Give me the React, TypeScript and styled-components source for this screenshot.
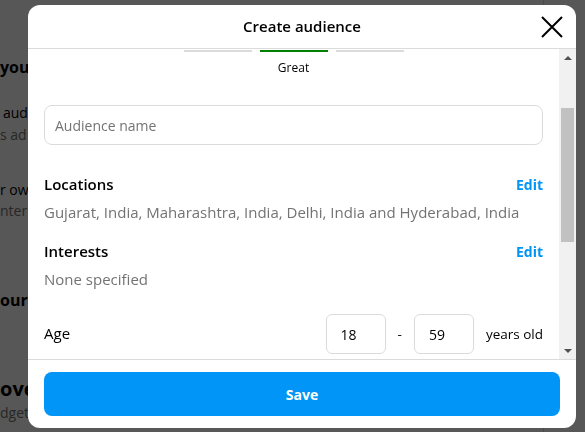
import React, { useLayoutEffect, useRef, useState } from "react";
import styled, { createGlobalStyle } from "styled-components";

const font = `"Open Sans", "Noto Sans", sans-serif`;

const GlobalStyle = createGlobalStyle`
  html, body { margin: 0; padding: 0; }
  body { font-family: ${font}; background: #fff; overflow: hidden; color: #000; }
  * { box-sizing: border-box; }
`;

/* page behind the dialog */
const Page = styled.div`
  display: flex;
  width: 585px;
  height: 432px;
`;
const PageMain = styled.div`
  width: 544px;
  border-right: 1px solid #dbdbdb;
  display: flex;
  flex-direction: column;
  overflow: hidden;
`;
const BgLine = styled.div<{ $top: number; $size?: number; $bold?: boolean; $muted?: boolean; $indent?: number }>`
  margin-top: ${(p) => p.$top}px;
  margin-left: ${(p) => p.$indent || 0}px;
  font-size: ${(p) => p.$size || 14}px;
  line-height: ${(p) => (p.$size && p.$size > 16 ? 24 : 20)}px;
  font-weight: ${(p) => (p.$bold ? 700 : 400)};
  color: ${(p) => (p.$muted ? "#737373" : "#000")};
  white-space: nowrap;
`;

/* dialog */
const Overlay = styled.div`
  position: fixed;
  inset: 0;
  background: rgba(0, 0, 0, 0.66);
  padding: 5px 0 0 28px;
`;
const Modal = styled.div`
  width: 548px;
  height: 423px;
  background: #fff;
  border-radius: 12px;
  display: flex;
  flex-direction: column;
  overflow: hidden;
`;
const Header = styled.div`
  height: 44px;
  flex: none;
  border-bottom: 1px solid #dbdbdb;
  display: grid;
  grid-template-columns: 48px 1fr 48px;
  align-items: center;
`;
const Title = styled.h1`
  grid-column: 2;
  margin: 0;
  text-align: center;
  font-size: 15px;
  font-weight: 600;
  color: #000;
  line-height: 20px;
  padding-bottom: 2px;
`;
const CloseButton = styled.button`
  grid-column: 3;
  justify-self: end;
  margin-right: 12px;
  width: 24px;
  height: 24px;
  padding: 0;
  border: 0;
  background: none;
  display: flex;
  align-items: center;
  justify-content: center;
  cursor: pointer;
`;
const BodyWrap = styled.div`
  flex: 1;
  min-height: 0;
  display: flex;
`;
const Body = styled.div`
  flex: 1;
  position: relative;
  overflow: hidden;
  padding: 0 16px;
`;

/* drawn scrollbar (the browser hides native ones) */
const ScrollBar = styled.div`
  width: 17px;
  flex: none;
  background: #f1f1f1;
  display: flex;
  flex-direction: column;
`;
const ScrollArrow = styled.div`
  height: 17px;
  flex: none;
  display: flex;
  align-items: center;
  justify-content: center;
`;
const ScrollTrack = styled.div`
  flex: 1;
  padding: 0 2px;
`;
const ScrollThumb = styled.div`
  background: #c1c1c1;
`;

const Footer = styled.div`
  flex: none;
  border-top: 1px solid #dbdbdb;
  padding: 12px 16px;
`;
const SaveButton = styled.button`
  width: 100%;
  height: 44px;
  border: 0;
  border-radius: 8px;
  background: #0095f6;
  color: #fff;
  font-family: ${font};
  font-size: 14px;
  font-weight: 700;
  cursor: pointer;
`;

/* audience size meter */
const SizeBlock = styled.div`
  padding-top: 20px;
  display: flex;
  flex-direction: column;
  align-items: center;
`;
const SizeTitle = styled.div`
  font-size: 15px;
  font-weight: 600;
  line-height: 20px;
`;
const SizeText = styled.div`
  margin-top: 6px;
  font-size: 14px;
  color: #737373;
  line-height: 18px;
`;
const Meter = styled.div`
  margin-top: 34px;
  display: flex;
  gap: 8px;
`;
const Segment = styled.div<{ $active?: boolean }>`
  width: 68px;
  height: 2px;
  background: ${(p) => (p.$active ? "#008000" : "#dbdbdb")};
`;
const MeterLabel = styled.div`
  margin-top: 8px;
  font-size: 12px;
  line-height: 16px;
  color: #000;
`;

const TextInput = styled.input`
  display: block;
  width: 100%;
  height: 40px;
  margin-top: 29px;
  padding: 0 10px;
  border: 1px solid #dbdbdb;
  border-radius: 8px;
  font-family: ${font};
  font-size: 14px;
  color: #000;
  outline: none;
  &::placeholder { color: #737373; }
`;

const Section = styled.div<{ $top: number }>`
  margin-top: ${(p) => p.$top}px;
`;
const SectionHead = styled.div`
  display: flex;
  justify-content: space-between;
  align-items: center;
  height: 20px;
`;
const Label = styled.div`
  font-size: 15px;
  font-weight: 600;
  line-height: 20px;
  color: #000;
`;
const EditLink = styled.a`
  font-size: 14px;
  font-weight: 700;
  color: #0095f6;
  text-decoration: none;
  cursor: pointer;
`;
const Value = styled.div`
  margin-top: 8px;
  font-size: 15px;
  line-height: 20px;
  color: #737373;
`;

const AgeRow = styled.div`
  margin-top: 25px;
  display: flex;
  align-items: center;
  gap: 12px;
`;
const AgeLabel = styled(Label)`
  flex: 1;
  font-weight: 500;
  padding-bottom: 2px;
`;
const AgeInput = styled.input`
  width: 60px;
  height: 40px;
  padding: 0 14px;
  border: 1px solid #dbdbdb;
  border-radius: 6px;
  font-family: ${font};
  font-size: 14px;
  color: #000;
  outline: none;
`;
const Plain = styled.span`
  font-size: 13.5px;
  color: #000;
`;

const Options = styled.div`
  margin-top: 12px;
  display: flex;
  flex-direction: column;
  gap: 12px;
`;
const Option = styled.label`
  display: flex;
  justify-content: space-between;
  align-items: center;
  font-size: 14px;
  line-height: 20px;
`;
const Radio = styled.span<{ $on?: boolean }>`
  width: 20px;
  height: 20px;
  border-radius: 50%;
  border: ${(p) => (p.$on ? "6px solid #0095f6" : "1px solid #c7c7c7")};
`;
const BottomSpace = styled.div`
  height: 92px;
`;

function Arrow({ down }: { down?: boolean }) {
  return (
    <svg width="8" height="4" viewBox="0 0 8 4">
      <polygon points={down ? "0,0 8,0 4,4" : "0,4 8,4 4,0"} fill="#505050" />
    </svg>
  );
}

export default function App() {
  const bodyRef = useRef<HTMLDivElement>(null);
  const meterRef = useRef<HTMLDivElement>(null);
  const trackRef = useRef<HTMLDivElement>(null);
  const [thumb, setThumb] = useState({ top: 0, height: 0 });

  useLayoutEffect(() => {
    const body = bodyRef.current;
    const meter = meterRef.current;
    const track = trackRef.current;
    if (!body || !meter || !track) return;
    body.scrollTop = meter.offsetTop - 1;
    const t = track.clientHeight;
    setThumb({
      top: (t * body.scrollTop) / body.scrollHeight,
      height: (t * body.clientHeight) / body.scrollHeight,
    });
  }, []);

  return (
    <>
      <GlobalStyle />
      <Page>
        <PageMain>
          <BgLine $top={57} $size={16} $bold>you want to reach?</BgLine>
          <BgLine $top={26} $indent={3}>audience you choose</BgLine>
          <BgLine $top={2} $muted>s ad to the people</BgLine>
          <BgLine $top={35}>r own audience</BgLine>
          <BgLine $top={1} $muted>nter details manually</BgLine>
          <BgLine $top={69} $size={16} $bold>our budget</BgLine>
          <BgLine $top={67} $size={20} $bold>overall</BgLine>
          <BgLine $top={2} $muted>dget per day</BgLine>
        </PageMain>
      </Page>
      <Overlay>
        <Modal>
          <Header>
            <Title>Create audience</Title>
            <CloseButton aria-label="Close">
              <svg width="24" height="24" viewBox="0 0 24 24">
                <path d="M2 2 L22 22 M22 2 L2 22" stroke="#000" strokeWidth="2" fill="none" />
              </svg>
            </CloseButton>
          </Header>
          <BodyWrap>
            <Body ref={bodyRef}>
              <SizeBlock>
                <SizeTitle>Audience definition</SizeTitle>
                <SizeText>Your audience selection is fairly broad.</SizeText>
                <Meter ref={meterRef}>
                  <Segment />
                  <Segment $active />
                  <Segment />
                </Meter>
                <MeterLabel>Great</MeterLabel>
              </SizeBlock>
              <TextInput placeholder="Audience name" />
              <Section $top={29}>
                <SectionHead>
                  <Label>Locations</Label>
                  <EditLink>Edit</EditLink>
                </SectionHead>
                <Value>Gujarat, India, Maharashtra, India, Delhi, India and Hyderabad, India</Value>
              </Section>
              <Section $top={19}>
                <SectionHead>
                  <Label>Interests</Label>
                  <EditLink>Edit</EditLink>
                </SectionHead>
                <Value>None specified</Value>
              </Section>
              <AgeRow>
                <AgeLabel>Age</AgeLabel>
                <AgeInput defaultValue="18" />
                <Plain>-</Plain>
                <AgeInput defaultValue="59" />
                <Plain>years old</Plain>
              </AgeRow>
              <Section $top={28}>
                <SectionHead>
                  <Label>Gender</Label>
                </SectionHead>
                <Options>
                  <Option>All <Radio $on /></Option>
                  <Option>Men <Radio /></Option>
                  <Option>Women <Radio /></Option>
                </Options>
              </Section>
              <BottomSpace />
            </Body>
            <ScrollBar>
              <ScrollArrow><Arrow /></ScrollArrow>
              <ScrollTrack ref={trackRef}>
                <ScrollThumb style={{ marginTop: thumb.top, height: thumb.height }} />
              </ScrollTrack>
              <ScrollArrow><Arrow down /></ScrollArrow>
            </ScrollBar>
          </BodyWrap>
          <Footer>
            <SaveButton>Save</SaveButton>
          </Footer>
        </Modal>
      </Overlay>
    </>
  );
}
